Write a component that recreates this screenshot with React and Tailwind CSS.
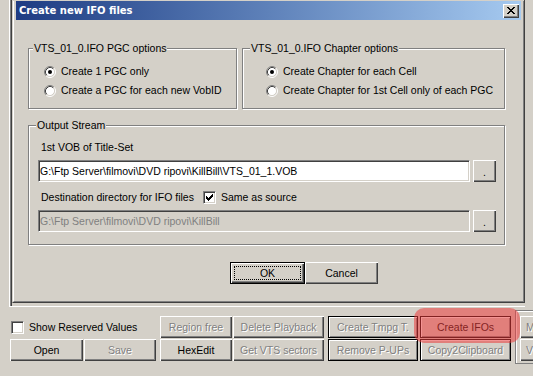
import React from "react";

const raised =
  "shadow-[inset_1px_1px_0_#fff,inset_-1px_-1px_0_#404040,inset_-2px_-2px_0_#808080]";
const framedRaised = "border border-black shadow-[inset_1px_1px_0_#fff,inset_-1px_-1px_0_#808080]";
const sunken =
  "border border-t-[#808080] border-l-[#808080] border-b-white border-r-white shadow-[inset_1px_1px_0_#404040,inset_-1px_-1px_0_#d4d0c8]";
const grayText = "text-[#808080] [text-shadow:1px_1px_0_#fff]";

const Btn = ({ children, className = "", disabled, framed }) => (
  <div
    className={`h-[22px] shrink-0 flex items-center justify-center bg-[#d4d0c8] whitespace-nowrap ${
      framed ? framedRaised : raised
    } ${disabled ? grayText : "text-black"} ${className}`}
  >
    {children}
  </div>
);

const Radio = ({ checked }) => (
  <svg width="12" height="12" viewBox="0 0 12 12" className="shrink-0">
    <circle cx="6" cy="6" r="4.5" fill="#fff" />
    <path d="M2.11 9.89 A5.5 5.5 0 0 1 9.89 2.11" stroke="#808080" fill="none" />
    <path d="M9.89 2.11 A5.5 5.5 0 0 1 2.11 9.89" stroke="#fff" fill="none" />
    <path d="M2.82 9.18 A4.5 4.5 0 0 1 9.18 2.82" stroke="#404040" fill="none" />
    <path d="M9.18 2.82 A4.5 4.5 0 0 1 2.82 9.18" stroke="#d4d0c8" fill="none" />
    {checked && <circle cx="6" cy="6" r="2" fill="#000" />}
  </svg>
);

const Check = ({ checked }) => (
  <div className={`w-[13px] h-[13px] shrink-0 bg-white flex items-center justify-center ${sunken}`}>
    {checked && (
      <svg width="7" height="7" viewBox="0 0 7 7" shapeRendering="crispEdges">
        <path
          d="M0 2h1v3h-1z M1 3h1v3h-1z M2 4h1v3h-1z M3 3h1v3h-1z M4 2h1v3h-1z M5 1h1v3h-1z M6 0h1v3h-1z"
          fill="#000"
        />
      </svg>
    )}
  </div>
);

const Group = ({ label, labelPos, className = "", children }) => (
  <div
    className={`relative shrink-0 border border-[#808080] shadow-[inset_1px_1px_0_#fff,1px_1px_0_#fff] ${className}`}
  >
    <span className={`absolute top-[-7px] px-[1px] bg-[#d4d0c8] leading-[13px] whitespace-nowrap ${labelPos}`}>
      {label}
    </span>
    {children}
  </div>
);

const RadioRow = ({ checked, children }) => (
  <div className="h-[19px] flex items-center gap-[5px] whitespace-nowrap">
    <Radio checked={checked} />
    <span>{children}</span>
  </div>
);

const PathField = ({ value, disabled }) => (
  <div className="flex gap-[3px]">
    <div
      className={`w-[432px] h-[22px] flex items-center pl-[1px] whitespace-nowrap overflow-hidden ${sunken} ${
        disabled ? "bg-[#d4d0c8] text-[#808080]" : "bg-white text-black"
      }`}
    >
      {value}
    </div>
    <Btn className="w-[23px] items-end pb-[3px]">.</Btn>
  </div>
);

export default function App() {
  return (
    <div className="relative w-[533px] h-[376px] overflow-hidden bg-[#d4d0c8] text-black text-[10.5px] leading-[13px] font-['Liberation_Sans',Arial,sans-serif]">
      {/* main window panel, mostly covered by the dialog */}
      <div className="pl-[9px]">
        <div className="w-[516px] h-[307px] border-l border-b border-white">
          <div className="h-full border-l border-[#808080]">
            <div className="h-full border-l border-[#404040]">
              {/* dialog */}
              <div className="w-[513px] h-[303px] pt-[1px] border-l border-r border-b border-l-[#d4d0c8] border-r-[#404040] border-b-[#404040]">
                <div className="h-full px-[2px] border-l border-r border-b border-l-white border-r-[#808080] border-b-[#808080]">
                  <div className="h-[19px] flex items-center justify-between pl-[3px] pr-[2px] bg-linear-to-r from-[#1f3c83] to-[#a6caf0]">
                    <span className="text-white font-bold text-[10px] font-['DejaVu_Sans',sans-serif]">
                      Create new IFO files
                    </span>
                    <div className={`w-[16px] h-[14px] flex items-center justify-center bg-[#d4d0c8] ${raised}`}>
                      <svg width="8" height="7" viewBox="0 0 8 7" shapeRendering="crispEdges" className="-mt-[1px]">
                        <path
                          d="M0 0h2v1h-2z M6 0h2v1h-2z M1 1h2v1h-2z M5 1h2v1h-2z M2 2h4v1h-4z M3 3h2v1h-2z M2 4h4v1h-4z M1 5h2v1h-2z M5 5h2v1h-2z M0 6h2v1h-2z M6 6h2v1h-2z"
                          fill="#000"
                        />
                      </svg>
                    </div>
                  </div>

                  <div className="flex mt-[28px] ml-[12px]">
                    <Group label="VTS_01_0.IFO PGC options" labelPos="left-[4px]" className="w-[209px] h-[61px] pt-[13px] pl-[15px]">
                      <RadioRow checked>Create 1 PGC only</RadioRow>
                      <RadioRow>Create a PGC for each new VobID</RadioRow>
                    </Group>
                    <Group label="VTS_01_0.IFO Chapter options" labelPos="left-[7px]" className="ml-[5px] w-[263px] h-[61px] pt-[13px] pl-[23px]">
                      <RadioRow checked>Create Chapter for each Cell</RadioRow>
                      <RadioRow>Create Chapter for 1st Cell only of each PGC</RadioRow>
                    </Group>
                  </div>

                  <Group label="Output Stream" labelPos="left-[7px]" className="mt-[16px] ml-[12px] w-[477px] h-[120px] pt-[15px] pl-[9px]">
                    <div className="pl-[3px]">1st VOB of Title-Set</div>
                    <div className="mt-[6px]">
                      <PathField value={"G:\\Ftp Server\\filmovi\\DVD ripovi\\KillBill\\VTS_01_1.VOB"} />
                    </div>
                    <div className="mt-[8px] h-[15px] flex items-center whitespace-nowrap">
                      <span className="w-[165px] pl-[3px]">Destination directory for IFO files</span>
                      <Check checked />
                      <span className="ml-[5px]">Same as source</span>
                    </div>
                    <div className="mt-[5px]">
                      <PathField value={"G:\\Ftp Server\\filmovi\\DVD ripovi\\KillBill"} disabled />
                    </div>
                  </Group>

                  <div className="flex mt-[17px] ml-[214px]">
                    <div className="relative w-[75px] h-[22px] flex items-center justify-center border border-black bg-[#d4d0c8] shadow-[inset_1px_1px_0_#fff,inset_-1px_-1px_0_#404040,inset_-2px_-2px_0_#808080]">
                      <span className="absolute inset-[3px] border border-dotted border-black" />
                      OK
                    </div>
                    <Btn className="w-[73px]">Cancel</Btn>
                  </div>
                </div>
              </div>
            </div>
          </div>
        </div>
      </div>

      {/* bottom button bar */}
      <div className="flex items-start pt-[9px] pl-[10px]">
        <div className="shrink-0 flex flex-col gap-[1px] w-[146px]">
          <div className="h-[22px] flex items-center pl-[1px] whitespace-nowrap">
            <Check />
            <span className="ml-[5px]">Show Reserved Values</span>
          </div>
          <div className="flex gap-[1px]">
            <Btn className="w-[73px]">Open</Btn>
            <Btn className="w-[72px]" disabled>
              Save
            </Btn>
          </div>
        </div>
        <div className="shrink-0 flex flex-col gap-[1px] ml-[4px] w-[72px]">
          <Btn disabled>Region free</Btn>
          <Btn>HexEdit</Btn>
        </div>
        <div className="shrink-0 flex flex-col gap-[1px] ml-[1px] w-[91px]">
          <Btn disabled>Delete Playback</Btn>
          <Btn disabled>Get VTS sectors</Btn>
        </div>
        <div className="shrink-0 flex flex-col gap-[1px] ml-[4px] w-[90px]">
          <Btn framed disabled>
            Create Tmpg T.
          </Btn>
          <Btn framed disabled>
            Remove P-UPs
          </Btn>
        </div>
        <div className="shrink-0 flex flex-col gap-[1px] ml-[2px] w-[91px]">
          <Btn framed>Create IFOs</Btn>
          <Btn framed disabled>
            Copy2Clipboard
          </Btn>
        </div>
        <div className="shrink-0 -mt-[6px] ml-[4px] w-[40px] h-[54px] border border-[#808080] shadow-[inset_1px_1px_0_#fff] pt-[5px] pl-[4px] flex flex-col gap-[1px]">
          <Btn className="w-[60px] justify-start pl-[6px]" disabled>
            M
          </Btn>
          <Btn className="w-[60px] justify-start pl-[6px]" disabled>
            V
          </Btn>
        </div>
      </div>

      {/* red highlight annotation */}
      <div className="absolute left-[414px] top-[308px] w-[106px] h-[35px] rounded-[10px] bg-[rgba(235,60,60,0.55)]" />
    </div>
  );
}
